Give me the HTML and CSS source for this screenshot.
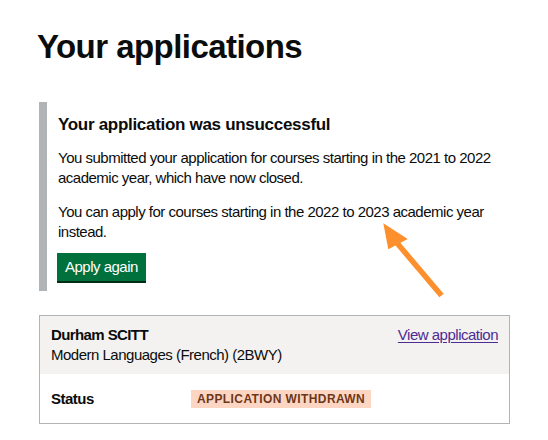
FILE: index.html
```html
<!DOCTYPE html>
<html lang="en">
<head>
<meta charset="utf-8">
<title>Your applications</title>
<link rel="stylesheet" href="styles.css">
</head>
<body>
<main class="page">
  <h1 class="title">Your applications</h1>

  <div class="inset">
    <h2 class="inset-heading">Your application was unsuccessful</h2>
    <p class="body">You submitted your application for courses starting in the 2021 to 2022 academic year, which have now closed.</p>
    <p class="body">You can apply for courses starting in the 2022 to 2023 academic year instead.</p>
    <a class="button" href="#">Apply again</a>
  </div>

  <section class="card">
    <div class="card-header">
      <div class="card-title">
        <div class="provider">Durham SCITT</div>
        <div class="course">Modern Languages (French) (2BWY)</div>
      </div>
      <a class="link" href="#">View application</a>
    </div>
    <div class="card-row">
      <div class="key">Status</div>
      <div class="value"><span class="tag">Application withdrawn</span></div>
    </div>
  </section>
</main>

<svg class="annotation" width="548" height="440" viewBox="0 0 548 440" aria-hidden="true">
  <line x1="397" y1="243" x2="441.5" y2="295.5" stroke="#fd8f2d" stroke-width="5.5" stroke-linecap="butt"/>
  <polygon points="383.3,223.3 407.7,239 388.3,249.3" fill="#fd8f2d"/>
</svg>
</body>
</html>
```

FILE: styles.css
```css
html, body {
  margin: 0;
  padding: 0;
  background: #ffffff;
}

body {
  position: relative;
  width: 548px;
  height: 440px;
  overflow: hidden;
  font-family: "Liberation Sans", Arial, sans-serif;
  color: #0b0c0c;
}

.page {
  width: 471px;
  padding: 27px 0 0 39px;
}

.title {
  margin: 0 0 35px -2px;
  font-size: 33px;
  line-height: 40px;
  font-weight: 700;
  letter-spacing: -0.55px;
}

.inset {
  display: flex;
  flex-direction: column;
  align-items: flex-start;
  border-left: 8px solid #b1b4b6;
  padding: 10px 8px 8px 11px;
}

.inset-heading {
  margin: 0 0 11px;
  font-size: 17px;
  line-height: 25px;
  font-weight: 700;
  letter-spacing: -0.3px;
}

.body {
  margin: 0 0 14px;
  font-size: 15px;
  line-height: 20px;
  letter-spacing: -0.5px;
}

.body + .button {
  margin-top: -3px;
}

.button {
  display: block;
  margin-left: -1px;
  margin-bottom: 2px;
  padding: 4px 8px;
  background: #00703c;
  box-shadow: 0 2px 0 #002d18;
  color: #ffffff;
  font-size: 15px;
  line-height: 20px;
  letter-spacing: -0.5px;
  text-decoration: none;
}

.card {
  margin-top: 24px;
  border: 1px solid #b1b4b6;
}

.card-header {
  display: flex;
  justify-content: space-between;
  align-items: flex-start;
  background: #f3f2f1;
  padding: 9px 11px 9px 11px;
}

.provider {
  font-size: 15px;
  line-height: 20px;
  font-weight: 700;
  letter-spacing: -0.6px;
}

.course {
  font-size: 15px;
  line-height: 20px;
  letter-spacing: -0.5px;
}

.link {
  font-size: 15px;
  line-height: 20px;
  letter-spacing: -0.5px;
  color: #4c2c92;
  text-decoration: underline;
  text-underline-offset: 2px;
}

.card-row {
  display: grid;
  grid-template-columns: 140px 1fr;
  align-items: center;
  padding: 15px 11px 14px;
}

.key {
  font-size: 15px;
  line-height: 20px;
  font-weight: 700;
  letter-spacing: -0.5px;
}

.value {
  display: flex;
  align-items: center;
}

.tag {
  display: inline-block;
  padding: 2px 6px 2px 6px;
  background: #fcd6c3;
  color: #6e3619;
  font-size: 12px;
  line-height: 14px;
  font-weight: 700;
  letter-spacing: 0.4px;
  text-transform: uppercase;
}

.annotation {
  position: absolute;
  top: 0;
  left: 0;
  pointer-events: none;
}
```
